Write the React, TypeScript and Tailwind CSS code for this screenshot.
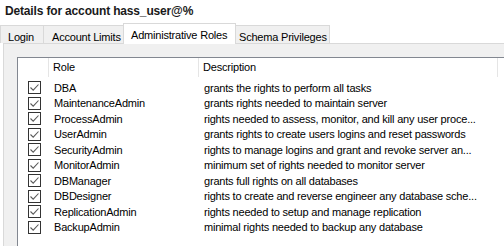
const roles = [
  { name: 'DBA', desc: 'grants the rights to perform all tasks' },
  { name: 'MaintenanceAdmin', desc: 'grants rights needed to maintain server' },
  { name: 'ProcessAdmin', desc: 'rights needed to assess, monitor, and kill any user proce...' },
  { name: 'UserAdmin', desc: 'grants rights to create users logins and reset passwords' },
  { name: 'SecurityAdmin', desc: 'rights to manage logins and grant and revoke server an...' },
  { name: 'MonitorAdmin', desc: 'minimum set of rights needed to monitor server' },
  { name: 'DBManager', desc: 'grants full rights on all databases' },
  { name: 'DBDesigner', desc: 'rights to create and reverse engineer any database sche...' },
  { name: 'ReplicationAdmin', desc: 'rights needed to setup and manage replication' },
  { name: 'BackupAdmin', desc: 'minimal rights needed to backup any database' },
]

const tabs = ['Login', 'Account Limits', 'Administrative Roles', 'Schema Privileges']

function CheckBox() {
  return (
    <div className="w-[13px] h-[13px] border border-[#333333] bg-white flex items-center justify-center">
      <svg width="11" height="11" viewBox="0 0 11 11">
        <path d="M1.5 5.5 L4.2 8.2 L9.5 2.5" fill="none" stroke="#5a5a5a" strokeWidth="1.1" />
      </svg>
    </div>
  )
}

export default function App() {
  return (
    <div className="w-[504px] h-[246px] bg-white overflow-hidden font-['Liberation_Sans',Arial,sans-serif] text-[#000000]">
      {/* Title */}
      <div className="h-[23px] pl-[5px] pt-[2px] text-[12px] font-bold tracking-[-0.16px] text-[#1a1a1a]">
        Details for account hass_user@%
      </div>

      {/* Tabs */}
      <div className="flex items-end h-[20px] text-[11px] tracking-[-0.2px]">
        {tabs.map((t, i) =>
          i === 2 ? (
            <div
              key={t}
              className="h-[21px] -mb-px relative z-10 bg-white border border-b-0 border-[#d9d9d9] w-[113px] flex items-start pt-[3px] pl-[7px]"
            >
              {t}
            </div>
          ) : (
            <div
              key={t}
              className={
                'h-[18px] bg-[#f0f0f0] border border-b-0 border-[#d9d9d9] flex items-start pt-[3px] ' +
                (i === 0 ? 'w-[44px] pl-[7px]' : i === 1 ? 'w-[80px] -ml-px pl-[8px] border-r-0' : 'w-[94px] pl-[3px] border-l-0')
              }
            >
              {t}
            </div>
          )
        )}
      </div>

      {/* Panel */}
      <div className="ml-[3px] h-[203px] border-l border-t border-[#d9d9d9] bg-[#f0f0f0] pl-[13px] pt-[13px]">
        <div className="h-full bg-white border-l border-t border-[#828790] text-[11px] tracking-[-0.2px]">
          {/* Header */}
          <div className="flex h-[19px] items-center">
            <div className="w-[31px] h-full border-r border-[#e5e5e5]" />
            <div className="w-[150px] h-full border-r border-[#e5e5e5] pl-[4px] flex items-center">Role</div>
            <div className="w-[299px] h-full border-r border-[#e5e5e5] pl-[4px] flex items-center">Description</div>
          </div>

          {/* Rows */}
          <div className="pt-[3px]">
            {roles.map((r) => (
              <div key={r.name} className="flex h-[15.5px] items-center">
                <div className="w-[31px] pl-[10px] flex items-center">
                  <CheckBox />
                </div>
                <div className="w-[150px] pl-[5px] whitespace-nowrap">{r.name}</div>
                <div className="w-[299px] pl-[5px] whitespace-nowrap">{r.desc}</div>
              </div>
            ))}
          </div>
        </div>
      </div>
    </div>
  )
}
